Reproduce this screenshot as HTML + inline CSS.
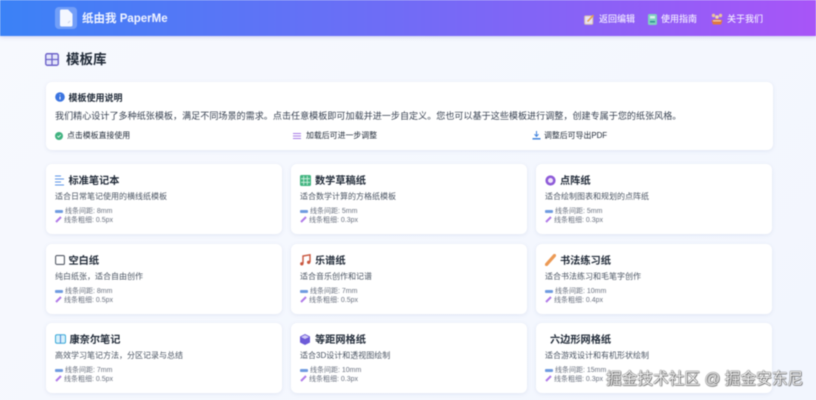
<!DOCTYPE html>
<html lang="zh"><head><meta charset="utf-8"><title>纸由我 PaperMe</title>
<style>
*{box-sizing:border-box;margin:0;padding:0}
html,body{width:816px;height:400px;overflow:hidden}
body{background:linear-gradient(135deg,#f7f9fe,#f2f6fe);font-family:"Liberation Sans","Noto Sans CJK SC",sans-serif;position:relative;color:#374151}
#w{position:absolute;inset:0;filter:blur(.5px)}
.a{position:absolute;white-space:nowrap}
header{position:absolute;left:0;top:0;width:816px;height:36px;background:linear-gradient(90deg,#3b82f6,#a855f7);box-shadow:0 1px 4px rgba(90,90,200,.25)}
.nav{font-size:9px;line-height:12px;color:#f0e9ff;top:13px;font-weight:500}
.card{position:absolute;width:236px;height:70px;background:#fff;border-radius:6px;box-shadow:0 1px 4px rgba(100,116,170,.13)}
.t{position:absolute;top:9.5px;font-size:10.2px;line-height:16px;font-weight:700;color:#1f2937;white-space:nowrap}
.d{position:absolute;left:9px;top:27px;font-size:8px;line-height:12px;color:#4b5563;white-space:nowrap}
.m{position:absolute;left:19px;font-size:7px;line-height:9px;color:#6b7280;white-space:nowrap}
.m1{top:43px}.m2{top:52px;left:18px}
.b{position:absolute;left:9px;top:45.5px;width:8px;height:3px;background:#6f9be0;border-radius:1px}
.p{position:absolute;left:9px;top:52px}
svg{position:absolute;display:block}
</style></head><body><div id="w">
<header>
<div class="a" style="left:55px;top:7px;width:22px;height:22px;border-radius:4px;background:rgba(255,255,255,.25)"></div>
<svg style="left:59px;top:9px" width="14" height="18" viewBox="0 0 14 18"><path d="M1 2Q1 0.5 2.5 0.5H9L13.5 5V16Q13.5 17.5 12 17.5H2.500Q1 17.500 1 16Z" fill="#f4f7ff"/><path d="M9 14l2-2" stroke="#c8d2ea"/></svg>
<div class="a" style="left:82px;top:10.500px;font-size:11.500px;line-height:16px;font-weight:700;color:#f1f4ff">纸由我 PaperMe</div>
<svg style="left:584px;top:13.500px" width="11" height="11" viewBox="0 0 11 11"><rect x=".7" y="2" width="8" height="8.300" rx="1" fill="#e8e0f4" stroke="#d9c3a8"/><path d="M3.500 7.500L9.500 1.200" stroke="#e5a04c" stroke-width="1.600"/></svg>
<div class="a nav" style="left:599px">返回编辑</div>
<svg style="left:648px;top:13.500px" width="10" height="11" viewBox="0 0 10 11"><rect width="9" height="11" rx="1.500" fill="#7fd0c0"/><rect x="2" y="2" width="5" height="2.500" fill="#d9f2ec"/><rect x="2" y="7" width="5" height="1.500" fill="#2f8f92"/></svg>
<div class="a nav" style="left:661px">使用指南</div>
<svg style="left:711px;top:12.500px" width="12" height="12" viewBox="0 0 12 12"><circle cx="2.500" cy="2.500" r="1.700" fill="#e9c39a"/><circle cx="9.500" cy="2.500" r="1.700" fill="#e9c39a"/><circle cx="6" cy="4" r="1.800" fill="#f0d5b0"/><path d="M.5 7.500Q6 4.500 11.500 7.500L10 11.500H2Z" fill="#e0793f"/><path d="M2 7.800H10" stroke="#f5e4d0"/></svg>
<div class="a nav" style="left:727px">关于我们</div>
</header>

<svg style="left:45px;top:53px" width="14" height="13" viewBox="0 0 14 13"><rect x=".75" y=".75" width="12.500" height="11.500" rx="1.500" fill="#e4e6fb" stroke="#6d63c9" stroke-width="1.400"/><path d="M7 1V12M1 6.500H13" stroke="#6d63c9" stroke-width="1.300"/></svg>
<div class="a" style="left:66px;top:51px;font-size:13.500px;line-height:18px;font-weight:700;color:#1f2937">模板库</div>

<div class="card" style="left:46px;top:82px;width:727px;height:68px">
<svg style="left:8.500px;top:10px" width="10" height="10" viewBox="0 0 10 10"><circle cx="5" cy="5" r="4.800" fill="#3b74e0"/><path d="M5 4.500V7.500M5 2.500V3.300" stroke="#fff"/></svg>
<div class="a" style="left:22.500px;top:9.500px;font-size:9px;line-height:13px;font-weight:700;color:#1f2937">模板使用说明</div>
<div class="a" style="left:9px;top:28px;font-size:9.080px;line-height:13px;color:#374151">我们精心设计了多种纸张模板，满足不同场景的需求。点击任意模板即可加载并进一步自定义。您也可以基于这些模板进行调整，创建专属于您的纸张风格。</div>
<svg style="left:8.500px;top:50px" width="8" height="8" viewBox="0 0 8 8"><circle cx="4" cy="4" r="4" fill="#3fb27f"/><path d="M2.300 4L3.600 5.200 5.800 2.900" stroke="#fff" fill="none" stroke-width=".8"/></svg>
<div class="a" style="left:21px;top:48px;font-size:7.900px;line-height:11px;color:#1f2937">点击模板直接使用</div>
<svg style="left:247px;top:50px" width="8" height="8" viewBox="0 0 8 8"><path d="M0 1.500H8M0 4H8M0 6.500H8" stroke="#a77be6" stroke-width="1"/></svg>
<div class="a" style="left:260px;top:48px;font-size:7.900px;line-height:11px;color:#1f2937">加载后可进一步调整</div>
<svg style="left:486px;top:49px" width="9" height="9" viewBox="0 0 9 9"><path d="M4.500 0V5M2.500 3.200L4.500 5.500 6.500 3.200" stroke="#3f82dd" fill="none"/><path d="M.5 7.800H8.500" stroke="#3f82dd" stroke-width="1.500"/></svg>
<div class="a" style="left:498px;top:48px;font-size:7.900px;line-height:11px;color:#1f2937">调整后可导出PDF</div>
</div>

<div class="card" style="left:46px;top:164px">
<svg style="left:9px;top:11px" width="10" height="11" viewBox="0 0 10 11"><path d="M0 1H6M0 4H9M0 7H6M0 10H9" stroke="#5b93e6" stroke-width="1.100"/></svg>
<div class="t" style="left:22.500px">标准笔记本</div><div class="d">适合日常笔记使用的横线纸模板</div>
<i class="b"></i><svg class="p" width="7" height="7" viewBox="0 0 7 7"><path d="M1 6L6 1" stroke="#b07ae8" stroke-width="2"/></svg>
<div class="m m1">线条间距: 8mm</div><div class="m m2">线条粗细: 0.5px</div></div>

<div class="card" style="left:291px;top:164px">
<svg style="left:9px;top:11px" width="11" height="11" viewBox="0 0 11 11"><rect width="11" height="11" rx="1.500" fill="#43b581"/><path d="M3.700 1V10M7.300 1V10M1 3.700H10M1 7.300H10" stroke="#d5f2e3" stroke-width=".8"/></svg>
<div class="t" style="left:24px">数学草稿纸</div><div class="d">适合数学计算的方格纸模板</div>
<i class="b"></i><svg class="p" width="7" height="7" viewBox="0 0 7 7"><path d="M1 6L6 1" stroke="#b07ae8" stroke-width="2"/></svg>
<div class="m m1">线条间距: 5mm</div><div class="m m2">线条粗细: 0.3px</div></div>

<div class="card" style="left:536px;top:164px">
<svg style="left:9px;top:11px" width="11" height="11" viewBox="0 0 11 11"><circle cx="5.500" cy="5.500" r="3.800" fill="#f0e6fb" stroke="#8e5bd8" stroke-width="2.600"/></svg>
<div class="t" style="left:24px">点阵纸</div><div class="d">适合绘制图表和规划的点阵纸</div>
<i class="b"></i><svg class="p" width="7" height="7" viewBox="0 0 7 7"><path d="M1 6L6 1" stroke="#b07ae8" stroke-width="2"/></svg>
<div class="m m1">线条间距: 5mm</div><div class="m m2">线条粗细: 0.3px</div></div>

<div class="card" style="left:46px;top:244px">
<svg style="left:9px;top:11px" width="10" height="10" viewBox="0 0 10 10"><rect x=".6" y=".6" width="8.800" height="8.800" rx="1.200" fill="#fff" stroke="#555b66" stroke-width="1.100"/></svg>
<div class="t" style="left:22.500px">空白纸</div><div class="d">纯白纸张，适合自由创作</div>
<i class="b"></i><svg class="p" width="7" height="7" viewBox="0 0 7 7"><path d="M1 6L6 1" stroke="#b07ae8" stroke-width="2"/></svg>
<div class="m m1">线条间距: 8mm</div><div class="m m2">线条粗细: 0.5px</div></div>

<div class="card" style="left:291px;top:244px">
<svg style="left:9px;top:10px" width="11" height="12" viewBox="0 0 11 12"><path d="M3 9.500V2L10 .8V8" stroke="#c9573f" stroke-width="1.400" fill="none"/><circle cx="1.800" cy="9.800" r="1.700" fill="#c9573f"/><circle cx="8.700" cy="8.300" r="1.700" fill="#c9573f"/></svg>
<div class="t" style="left:24px">乐谱纸</div><div class="d">适合音乐创作和记谱</div>
<i class="b"></i><svg class="p" width="7" height="7" viewBox="0 0 7 7"><path d="M1 6L6 1" stroke="#b07ae8" stroke-width="2"/></svg>
<div class="m m1">线条间距: 7mm</div><div class="m m2">线条粗细: 0.5px</div></div>

<div class="card" style="left:536px;top:244px">
<svg style="left:9px;top:10px" width="11" height="12" viewBox="0 0 11 12"><path d="M1.500 10.500L9.500 1.500" stroke="#ec9a55" stroke-width="3.200" stroke-linecap="round"/></svg>
<div class="t" style="left:24px">书法练习纸</div><div class="d">适合书法练习和毛笔字创作</div>
<i class="b"></i><svg class="p" width="7" height="7" viewBox="0 0 7 7"><path d="M1 6L6 1" stroke="#b07ae8" stroke-width="2"/></svg>
<div class="m m1">线条间距: 10mm</div><div class="m m2">线条粗细: 0.4px</div></div>

<div class="card" style="left:46px;top:323px">
<svg style="left:9px;top:11px" width="11" height="10" viewBox="0 0 11 10"><rect x=".5" y=".7" width="10" height="8.600" rx="1.500" fill="#d7f1fb" stroke="#3aa8d8" stroke-width="1"/><path d="M5.500 1V9" stroke="#4d86d8"/></svg>
<div class="t" style="left:23.500px">康奈尔笔记</div><div class="d">高效学习笔记方法，分区记录与总结</div>
<i class="b"></i><svg class="p" width="7" height="7" viewBox="0 0 7 7"><path d="M1 6L6 1" stroke="#b07ae8" stroke-width="2"/></svg>
<div class="m m1">线条间距: 7mm</div><div class="m m2">线条粗细: 0.5px</div></div>

<div class="card" style="left:291px;top:323px">
<svg style="left:9px;top:11px" width="10" height="11" viewBox="0 0 10 11"><path d="M5 0L10 2.500V8.500L5 11 0 8.500V2.500Z" fill="#6d5bd8"/><path d="M1 3L5 5 9 3 5 1Z" fill="#cfc8f5"/></svg>
<div class="t" style="left:24px">等距网格纸</div><div class="d">适合3D设计和透视图绘制</div>
<i class="b"></i><svg class="p" width="7" height="7" viewBox="0 0 7 7"><path d="M1 6L6 1" stroke="#b07ae8" stroke-width="2"/></svg>
<div class="m m1">线条间距: 10mm</div><div class="m m2">线条粗细: 0.3px</div></div>

<div class="card" style="left:536px;top:323px">
<div class="t" style="left:14px">六边形网格纸</div><div class="d">适合游戏设计和有机形状绘制</div>
<i class="b"></i><svg class="p" width="7" height="7" viewBox="0 0 7 7"><path d="M1 6L6 1" stroke="#b07ae8" stroke-width="2"/></svg>
<div class="m m1">线条间距: 15mm</div><div class="m m2">线条粗细: 0.3px</div></div>

<div class="a" style="left:606px;top:369.500px;font-size:15.700px;line-height:20px;color:#f2f2f2;text-shadow:0 0 1px #333,0 0 1px #333,.5px .5px 1px #444">掘金技术社区 @ 掘金安东尼</div>
</div></body></html>
